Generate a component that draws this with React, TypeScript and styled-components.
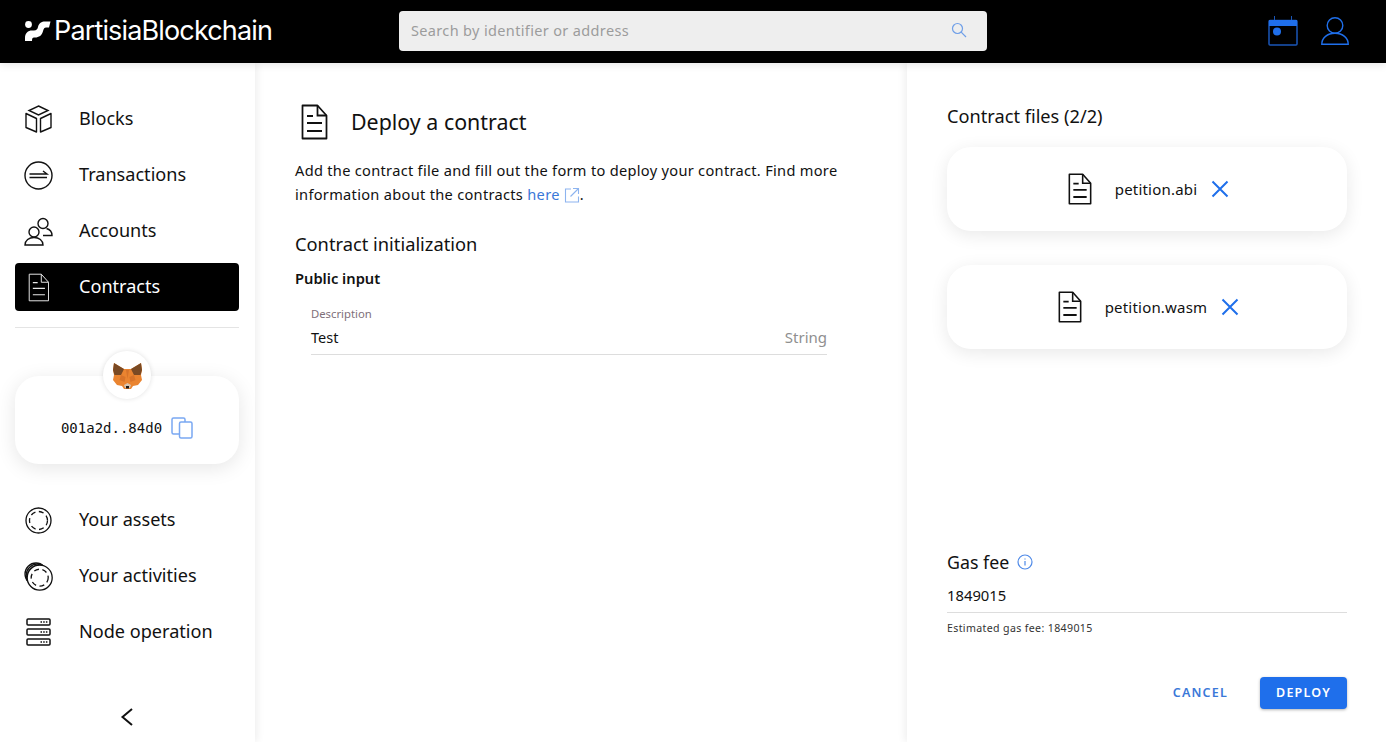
import * as React from 'react';
import styled, { createGlobalStyle } from 'styled-components';

const blue = '#1f6feb';

const GlobalStyle = createGlobalStyle`
  html, body {
    margin: 0;
    height: 100%;
    background: #fff;
    color: #111;
    font-family: 'Noto Sans', sans-serif;
  }
  * { box-sizing: border-box; }
`;

const Page = styled.div`
  width: 1386px;
  height: 742px;
  display: flex;
  flex-direction: column;
  overflow: hidden;
`;

const Header = styled.header`
  height: 63px;
  flex: none;
  background: #000;
  display: flex;
  align-items: center;
  padding: 0 37px 2px 25px;
  position: relative;
  z-index: 3;
  box-shadow: 0 2px 8px rgba(0, 0, 0, 0.1);
`;

const Logo = styled.div`
  width: 374px;
  display: flex;
  align-items: center;
  gap: 3px;
  color: #fff;
  font-family: Inter, sans-serif;
  font-size: 27px;
  font-weight: 400;
  letter-spacing: -0.85px;
`;

const SearchBox = styled.div`
  width: 588px;
  height: 40px;
  background: #eeeeee;
  border-radius: 4px;
  display: flex;
  align-items: center;
  justify-content: space-between;
  padding: 0 20px 2px 12px;
  font-size: 14.5px;
  letter-spacing: 0.35px;
  color: #9c9c9c;
`;

const HeaderIcons = styled.div`
  margin-left: auto;
  display: flex;
  align-items: center;
  gap: 23px;
`;

const Body = styled.div`
  flex: 1;
  display: flex;
  min-height: 0;
`;

const Sidebar = styled.aside`
  width: 255px;
  flex: none;
  padding: 32px 16px 0 15px;
  display: flex;
  flex-direction: column;
  box-shadow: 2px 0 8px rgba(0, 0, 0, 0.07);
  position: relative;
  z-index: 2;
  background: #fff;
`;

const NavList = styled.nav`
  display: flex;
  flex-direction: column;
  gap: 8px;
`;

const NavItem = styled.div<{ $active?: boolean }>`
  height: 48px;
  display: flex;
  align-items: center;
  gap: 26px;
  padding: 0 0 0 9px;
  border-radius: 4px;
  font-size: 18.1px;
  line-height: 46px;
  background: ${(p) => (p.$active ? '#000' : 'transparent')};
  color: ${(p) => (p.$active ? '#fff' : '#111')};
`;

const NavLabel = styled.span`
  margin-top: -2px;
`;

const IconSlot = styled.span`
  width: 29px;
  height: 29px;
  flex: none;
  display: flex;
  align-items: center;
  justify-content: center;
`;

const Divider = styled.hr`
  border: 0;
  height: 1px;
  background: #e4e4e4;
  margin: 16px 0 0;
`;

const WalletCard = styled.div`
  position: relative;
  margin-top: 48px;
  height: 88px;
  border-radius: 24px;
  background: #fff;
  box-shadow: 0 4px 20px rgba(0, 0, 0, 0.1);
  display: flex;
  align-items: center;
  justify-content: center;
  gap: 9px;
  padding-top: 16px;
  font-family: 'DejaVu Sans Mono', monospace;
  font-size: 14px;
`;

const FoxBadge = styled.div`
  position: absolute;
  left: 50%;
  top: -25px;
  width: 48px;
  height: 48px;
  margin-left: -24px;
  border-radius: 50%;
  background: #fff;
  box-shadow: 0 0 5px rgba(0, 0, 0, 0.12);
  display: flex;
  align-items: center;
  justify-content: center;
`;

const SecondNav = styled(NavList)`
  margin-top: 32px;
`;

const Collapse = styled.div`
  margin-top: auto;
  height: 34px;
  display: flex;
  justify-content: center;
`;

const Main = styled.main`
  flex: 1;
  padding: 39px 65px 0 40px;
`;

const TitleRow = styled.div`
  display: flex;
  align-items: center;
  gap: 23px;
  height: 40px;
  padding-left: 6px;
`;

const Title = styled.h1`
  margin: 0 0 2px;
  font-size: 21.4px;
  font-weight: 400;
`;

const Intro = styled.p`
  margin: 16px 0 0;
  font-size: 14.6px;
  line-height: 24px;
  letter-spacing: 0.3px;
`;

const Link = styled.span`
  color: #3a78d8;
`;

const SectionTitle = styled.h2`
  margin: 26px 0 0;
  font-size: 18.3px;
  line-height: 24px;
  font-weight: 400;
`;

const SubTitle = styled.h3`
  margin: 12px 0 0;
  font-size: 14.7px;
  line-height: 20px;
  font-weight: 600;
`;

const FieldRow = styled.div`
  margin: 19px 0 0 16px;
  width: 516px;
  border-bottom: 1px solid #dddddd;
  padding-bottom: 7px;
`;

const FieldLabel = styled.div`
  font-size: 11.3px;
  line-height: 14px;
  color: #80707a;
`;

const FieldValue = styled.div`
  margin-top: 6px;
  display: flex;
  justify-content: space-between;
  font-size: 14.5px;
  line-height: 20px;
`;

const FieldType = styled.span`
  color: #8f8f8f;
  font-size: 15px;
`;

const FilesPanel = styled.aside`
  width: 479px;
  flex: none;
  padding: 39px 39px 33px 40px;
  display: flex;
  flex-direction: column;
  box-shadow: -2px 0 8px rgba(0, 0, 0, 0.07);
`;

const PanelTitle = styled.h2`
  margin: 0;
  font-size: 18.2px;
  line-height: 28px;
  font-weight: 400;
`;

const FileCard = styled.div`
  margin-top: 17px;
  height: 84px;
  padding-left: 3px;
  border-radius: 24px;
  background: #fff;
  box-shadow: 0 4px 18px rgba(0, 0, 0, 0.09);
  display: flex;
  align-items: center;
  justify-content: center;
  font-size: 15px;
  letter-spacing: 0.2px;
  & + & {
    margin-top: 34px;
  }
`;

const FileName = styled.span`
  margin: 0 14px 0 23px;
`;

const GasBlock = styled.div`
  margin-top: auto;
`;

const GasTitle = styled.div`
  display: flex;
  align-items: center;
  gap: 8px;
  font-size: 17.8px;
  line-height: 24px;
`;

const GasValue = styled.div`
  margin-top: 11px;
  padding-bottom: 7px;
  border-bottom: 1px solid #dddddd;
  font-size: 14.8px;
  line-height: 20px;
`;

const GasHint = styled.div`
  margin-top: 7px;
  font-size: 10.6px;
  line-height: 16px;
  letter-spacing: 0.36px;
  color: #333;
`;

const Actions = styled.div`
  margin-top: 41px;
  display: flex;
  justify-content: flex-end;
  align-items: center;
  gap: 32px;
`;

const CancelButton = styled.button`
  border: 0;
  background: none;
  padding: 0 0 2px;
  font: 600 12.5px 'Noto Sans', sans-serif;
  letter-spacing: 1.2px;
  color: #3a78d8;
`;

const DeployButton = styled.button`
  width: 87px;
  height: 32px;
  border: 0;
  border-radius: 4px;
  padding: 0 0 2px;
  background: ${blue};
  box-shadow: 0 1px 3px rgba(0, 0, 0, 0.3);
  color: #fff;
  font: 600 12.5px 'Noto Sans', sans-serif;
  letter-spacing: 1.2px;
`;

const DocIcon = ({ size = 32, color = '#111', sw = 1.6 }: { size?: number; color?: string; sw?: number }) => (
  <svg width={(size * 27) / 36} height={size} viewBox="0 0 27 36" fill="none" stroke={color} strokeWidth={sw * 1.1}>
    <path d="M1.5 1.5h15l9 10v23h-24z" strokeLinejoin="round" />
    <path d="M16.5 1.5v10h9" />
    <path d="M6 12h6M6 19h15M6 27h15" strokeWidth={sw * 1.3} />
  </svg>
);

const CubeIcon = () => (
  <svg width="27" height="28" viewBox="0 0 27 28" fill="none" stroke="#111" strokeWidth="1.4">
    <path d="M13.5 1l9.5 4.5-9.5 4.500-9.500-4.500z" />
    <path d="M1 8.500l10.500 5V27L1 22.500zM26 8.500l-10.500 5V27L26 22.500z" strokeLinejoin="round" />
  </svg>
);

const TransferIcon = () => (
  <svg width="29" height="29" viewBox="0 0 29 29" fill="none" stroke="#111" strokeWidth="1.4">
    <circle cx="14.500" cy="14.500" r="13.500" />
    <path d="M5.500 13H23l-4-3M5.500 16.500H23" />
  </svg>
);

const PeopleIcon = () => (
  <svg width="29" height="29" viewBox="0 0 29 29" fill="none" stroke="#111" strokeWidth="1.4">
    <circle cx="19" cy="6.500" r="5" />
    <path d="M22.500 11.500c3 .8 5.500 3.500 5.500 7h-9" />
    <circle cx="10" cy="15" r="5" />
    <path d="M1 28c0-4.500 4-7.500 9-7.500s9 3 9 7.500z" />
  </svg>
);

const CoinIcon = () => (
  <svg width="27" height="27" viewBox="0 0 27 27" fill="none" stroke="#111" strokeWidth="1.3">
    <circle cx="13.500" cy="13.500" r="12.500" />
    <circle cx="13.500" cy="13.500" r="9" strokeDasharray="5 3.500" />
  </svg>
);

const CoinsIcon = () => (
  <svg width="29" height="29" viewBox="0 0 29 29" fill="none" stroke="#111" strokeWidth="1.3">
    <circle cx="12" cy="12" r="11" />
    <circle cx="13.200" cy="13.200" r="11" fill="#fff" />
    <circle cx="14.400" cy="14.400" r="11" fill="#fff" />
    <circle cx="15.700" cy="15.700" r="12.500" fill="#fff" />
    <circle cx="15.700" cy="15.700" r="8.500" strokeDasharray="5 3.500" />
  </svg>
);

const ServerIcon = () => (
  <svg width="25" height="28" viewBox="0 0 25 28" fill="none" stroke="#111" strokeWidth="1.500">
    <rect x="1" y="1" width="23" height="6" rx="1" />
    <rect x="1" y="11" width="23" height="6" rx="1" />
    <rect x="1" y="21" width="23" height="6" rx="1" />
    <path d="M14.500 4h7M14.500 14h7M14.500 24h7" strokeDasharray="1.500 1.200" />
  </svg>
);

const FoxIcon = () => (
  <svg width="29" height="27" viewBox="0 0 29 27">
    <path d="M1 1l10 6h7l10-6 1 7-1 5 1 5-4 5-5 1-2 3h-7l-2-3-5-1-4-5 1-5-1-5z" fill="#ea8430" />
    <path d="M1 1l10 6-3 6-6.500 0L0 8zM28 1L18 7l3 6 6.500 0L29 8z" fill="#7a4a24" />
    <path d="M8 13l4.500 2-1 5-5-2zM21 13l-4.500 2 1 5 5-2zM13 8h3l-1.500 9z" fill="#d8742a" />
    <path d="M11 23l3.500-2 3.500 2-1 3h-5z" fill="#d8c4ae" />
    <path d="M13 24h3v2.500h-3z" fill="#1f1a17" />
  </svg>
);

const CopyIcon = () => (
  <svg width="22" height="22" viewBox="0 0 22 22" fill="#fff" stroke="#7aa8f2" strokeWidth="1.500">
    <rect x="1" y="1" width="13" height="16" rx="1.500" />
    <rect x="8.500" y="5" width="12.500" height="16" rx="1.500" />
  </svg>
);

const CloseIcon = () => (
  <svg width="18" height="18" viewBox="0 0 18 18" fill="none" stroke={blue} strokeWidth="2">
    <path d="M1.500 1.500l15 15M16.500 1.500l-15 15" />
  </svg>
);

export default function App() {
  return (
    <>
      <GlobalStyle />
      <Page>
        <Header>
          <Logo>
            <svg width="26" height="20" viewBox="0 0 26 20" fill="#fff">
              <circle cx="3.500" cy="3.500" r="3.400" />
              <path d="M0 20v-3c0-5 3-7.500 7-7.500h2c2.500 0 3.500-1.500 4-3.500C14 2 16.500.5 20 .5h5.500L24 6.500h-3c-1.500 0-2.200 1-2.800 3-1.200 5-4.200 7-8.200 7H9c-1.500 0-2 1-2 3.500z" />
            </svg>
            PartisiaBlockchain
          </Logo>
          <SearchBox>
            Search by identifier or address
            <svg width="16" height="16" viewBox="0 0 16 16" fill="none" stroke="#6f9fe8" strokeWidth="1.200">
              <circle cx="6.500" cy="6.500" r="5" />
              <path d="M10.200 10.200L15 15" />
            </svg>
          </SearchBox>
          <HeaderIcons>
            <svg width="30" height="30" viewBox="0 0 30 30" fill="none" stroke="#1a56b8" strokeWidth="1.500">
              <path d="M6.500 0v5M23.500 0v5" strokeWidth="1" />
              <rect x="1" y="4.500" width="28" height="24.500" rx="1" />
              <path d="M1 4h28v6H1z" fill={blue} stroke="none" />
              <circle cx="9" cy="15.500" r="4" fill={blue} stroke="none" />
            </svg>
            <svg width="28" height="28" viewBox="0 0 28 28" fill="none" stroke={blue} strokeWidth="1.400">
              <circle cx="14" cy="8.500" r="7.800" />
              <path d="M.8 27.300c0-6.500 5.500-11 13.200-11s13.200 4.500 13.200 11z" />
            </svg>
          </HeaderIcons>
        </Header>
        <Body>
          <Sidebar>
            <NavList>
              <NavItem><IconSlot><CubeIcon /></IconSlot><NavLabel>Blocks</NavLabel></NavItem>
              <NavItem><IconSlot><TransferIcon /></IconSlot><NavLabel>Transactions</NavLabel></NavItem>
              <NavItem><IconSlot><PeopleIcon /></IconSlot><NavLabel>Accounts</NavLabel></NavItem>
              <NavItem $active><IconSlot><DocIcon size={29} color="#e8e8e8" sw={1.1} /></IconSlot><NavLabel>Contracts</NavLabel></NavItem>
            </NavList>
            <Divider />
            <WalletCard>
              <FoxBadge><FoxIcon /></FoxBadge>
              001a2d..84d0
              <CopyIcon />
            </WalletCard>
            <SecondNav>
              <NavItem><IconSlot><CoinIcon /></IconSlot><NavLabel>Your assets</NavLabel></NavItem>
              <NavItem><IconSlot><CoinsIcon /></IconSlot><NavLabel>Your activities</NavLabel></NavItem>
              <NavItem><IconSlot><ServerIcon /></IconSlot><NavLabel>Node operation</NavLabel></NavItem>
            </SecondNav>
            <Collapse>
              <svg width="14" height="18" viewBox="0 0 14 18" fill="none" stroke="#111" strokeWidth="2">
                <path d="M12 1L2.500 9l9.500 8" />
              </svg>
            </Collapse>
          </Sidebar>
          <Main>
            <TitleRow>
              <DocIcon size={36} />
              <Title>Deploy a contract</Title>
            </TitleRow>
            <Intro>
              Add the contract file and fill out the form to deploy your contract. Find more information about the contracts{' '}
              <Link>here</Link>{' '}
              <svg width="16" height="16" viewBox="0 0 16 16" fill="none" stroke="#8db4ef" strokeWidth="1.100" style={{ verticalAlign: -3 }}>
                <path d="M7 2H1.500v13h13V9.500M9 1.500h5.500V7M14.500 1.500L6.500 9.500" />
              </svg>.
            </Intro>
            <SectionTitle>Contract initialization</SectionTitle>
            <SubTitle>Public input</SubTitle>
            <FieldRow>
              <FieldLabel>Description</FieldLabel>
              <FieldValue>Test<FieldType>String</FieldType></FieldValue>
            </FieldRow>
          </Main>
          <FilesPanel>
            <PanelTitle>Contract files (2/2)</PanelTitle>
            <FileCard>
              <DocIcon size={32} />
              <FileName>petition.abi</FileName>
              <CloseIcon />
            </FileCard>
            <FileCard>
              <DocIcon size={32} />
              <FileName>petition.wasm</FileName>
              <CloseIcon />
            </FileCard>
            <GasBlock>
              <GasTitle>
                Gas fee
                <svg width="16" height="16" viewBox="0 0 16 16" fill="none" stroke="#4f8ae8" strokeWidth="1.200">
                  <circle cx="8" cy="8" r="7" />
                  <path d="M8 7v4.500M8 4.500v1" />
                </svg>
              </GasTitle>
              <GasValue>1849015</GasValue>
              <GasHint>Estimated gas fee: 1849015</GasHint>
              <Actions>
                <CancelButton>CANCEL</CancelButton>
                <DeployButton>DEPLOY</DeployButton>
              </Actions>
            </GasBlock>
          </FilesPanel>
        </Body>
      </Page>
    </>
  );
}
